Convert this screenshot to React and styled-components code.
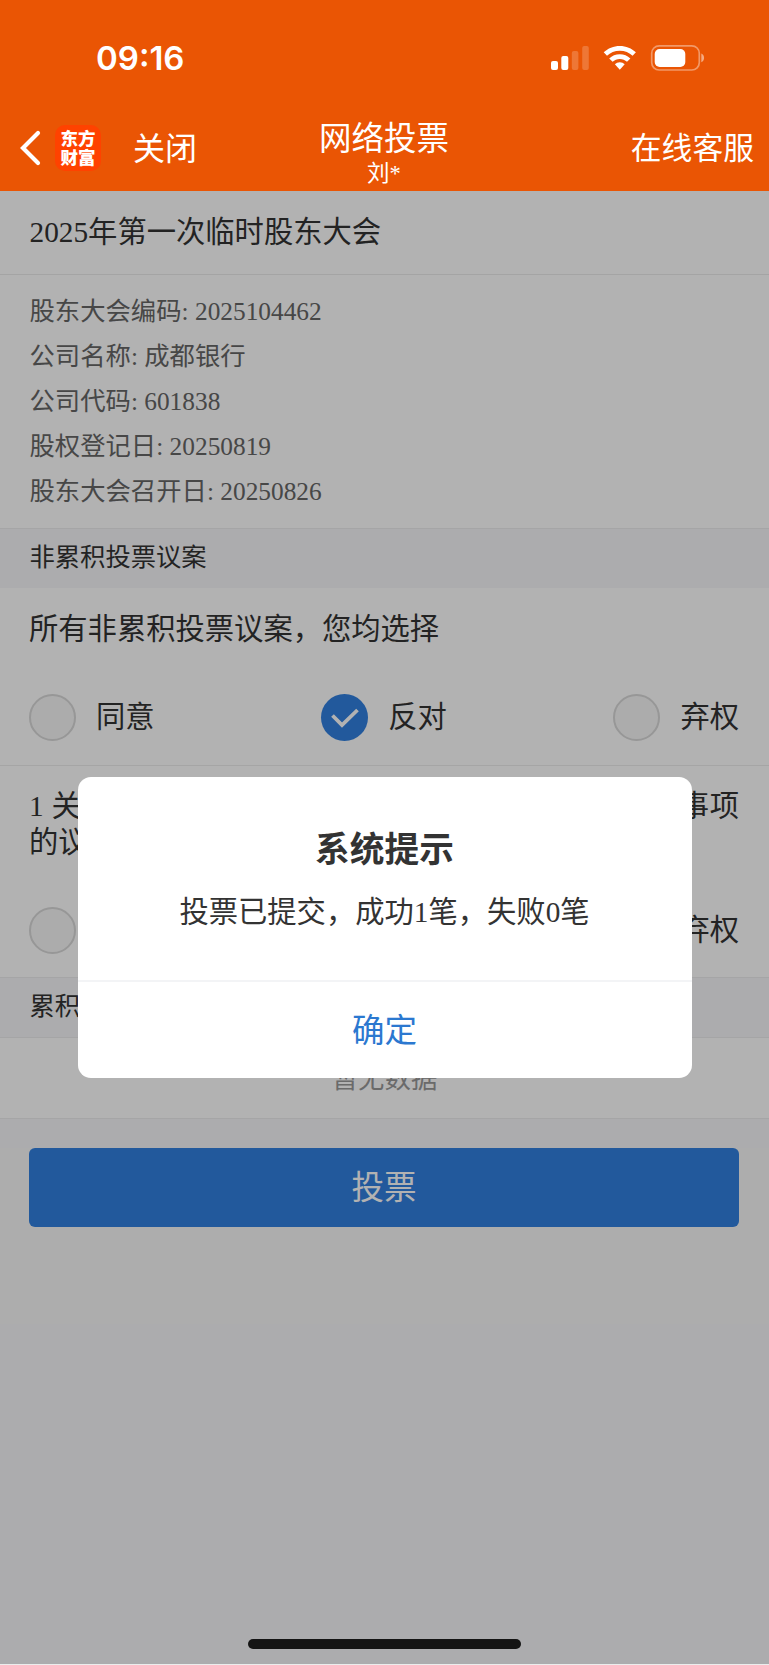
import React, { useState } from 'react';
import styled, { createGlobalStyle } from 'styled-components';

const GlobalStyle = createGlobalStyle`
  * {
    box-sizing: border-box;
  }

  body {
    margin: 0;
    background-color: #f6f7f9;
    font-family: 'Liberation Serif', 'Noto Sans CJK SC', serif;
    color: #333;
  }

  button, h1, h2, p {
    margin: 0;
    padding: 0;
    font: inherit;
  }
`;

const Screen = styled.div`
  display: flex;
  flex-direction: column;
  width: 769px;
  height: 1665px;
  border-bottom: 1px solid #eceded;
  overflow: hidden;
`;

const Header = styled.header`
  height: 191px;
  background-color: #ea5504;
  color: #fff;
  font-family: 'Noto Sans CJK SC', sans-serif;
`;

const StatusBar = styled.div`
  display: flex;
  justify-content: space-between;
  align-items: center;
  height: 115px;
  padding: 0 64px 0 96px;
`;

const Clock = styled.span`
  font-family: Inter, sans-serif;
  font-size: 33px;
  font-weight: 600;
  line-height: 40px;
`;

const StatusIcons = styled.svg`
  display: block;
  width: 154px;
  height: 28px;
`;

const NavBar = styled.nav`
  display: grid;
  grid-template-columns: 1fr auto 1fr;
  height: 76px;
  padding: 0 15px 0 20px;
`;

const NavLeft = styled.div`
  display: flex;
  align-items: center;
  height: 66px;
`;

const BackIcon = styled.svg`
  width: 21px;
  height: 36px;
  margin-right: 14px;
`;

const Logo = styled.div`
  width: 46px;
  height: 46px;
  margin-right: 32px;
  padding-top: 3px;
  border-radius: 10px;
  background-color: #ff4200;
  font-size: 17.5px;
  font-weight: 900;
  line-height: 19px;
  text-align: center;
`;

const NavAction = styled.button`
  justify-self: end;
  height: 66px;
  padding-bottom: 4px;
  border: none;
  background: none;
  color: #fff;
  font-size: ${({ $end }) => ($end ? '30.8px' : '32px')};
  line-height: 62px;
`;

const NavTitle = styled.div`
  margin-right: 6px;
  text-align: center;
`;

const Title = styled.h1`
  font-size: 32.5px;
  line-height: 42px;
`;

const Subtitle = styled.p`
  padding-top: 1px;
  font-family: 'Liberation Serif', 'Noto Sans CJK SC', serif;
  font-size: 22.5px;
  line-height: 32px;
`;

const Content = styled.main`
  position: relative;
  flex: 1;
`;

const MeetingTitle = styled.h2`
  height: 84px;
  padding-left: 29.5px;
  border-bottom: 1px solid #ebebeb;
  background-color: #fff;
  font-size: 29.3px;
  line-height: 82px;
`;

const MeetingInfo = styled.div`
  height: 253px;
  padding: 14px 29.5px 0;
  background-color: #fff;
  color: #666;
  font-size: 25.35px;
  line-height: 45px;
`;

const SectionTitle = styled.div`
  height: 60px;
  padding-left: 29.5px;
  border-top: 1px solid #ededee;
  font-size: 25.3px;
  line-height: 57px;
`;

const Proposal = styled.section`
  height: ${({ $height }) => $height};
  padding: ${({ $top }) => $top} 30px 0 29px;
  background-color: #fff;
  border-bottom: ${({ $last }) => ($last ? 'none' : '1px solid #ededed')};
`;

const ProposalText = styled.p`
  height: ${({ $lines }) => $lines * 36}px;
  font-size: 29.3px;
  line-height: 35.5px;
  text-align: justify;
`;

const Options = styled.div`
  display: flex;
  justify-content: space-between;
  align-items: center;
  margin-top: 46px;
`;

const Option = styled.button`
  display: flex;
  align-items: center;
  gap: 20px;
  border: none;
  background: none;
  color: #333;
  font-size: 29.3px;
  line-height: 47px;
`;

const Radio = styled.span`
  display: flex;
  justify-content: center;
  align-items: center;
  width: 47px;
  height: 47px;
  border: ${({ $checked }) => ($checked ? 'none' : '2px solid #d8d8d8')};
  border-radius: 50%;
  background-color: ${({ $checked }) => ($checked ? '#3180e0' : '#f7f7f7')};
`;

const EmptyRow = styled.div`
  height: 82px;
  border-top: 1px solid #ededee;
  border-bottom: 1px solid #ededee;
  background-color: #fff;
  color: #999;
  font-size: 26.4px;
  line-height: 83px;
  text-align: center;
`;

const SubmitArea = styled.div`
  height: 176px;
  margin-top: 29px;
  padding: 0 30px 0 29px;
  background-color: #f8f8f8;
`;

const SubmitButton = styled.button`
  width: 100%;
  height: 78.5px;
  padding-top: 2px;
  border: none;
  border-radius: 6px;
  background-color: #3180e0;
  color: #fff;
  font-size: 32.5px;
  line-height: 48px;
`;

const Overlay = styled.div`
  position: absolute;
  inset: 0;
  display: flex;
  justify-content: center;
  align-items: flex-start;
  padding-top: 586px;
  background-color: rgba(0, 0, 0, 0.3);
`;

const Dialog = styled.div`
  width: 614px;
  height: 301px;
  padding-top: 50px;
  border-radius: 13px;
  background-color: #fff;
  text-align: center;
`;

const DialogTitle = styled.h2`
  font-size: 34.7px;
  font-weight: 700;
  line-height: 48px;
`;

const DialogText = styled.p`
  height: 105px;
  padding-top: 15px;
  font-size: 29.3px;
  line-height: 45px;
`;

const DialogButton = styled.button`
  width: 100%;
  height: 98px;
  padding-top: 2px;
  border: none;
  border-top: 2px solid #f3f4f6;
  background: none;
  color: #2b78d0;
  font-size: 32.5px;
  line-height: 48px;
`;

const HomeIndicator = styled.div`
  position: absolute;
  bottom: 15px;
  left: 248px;
  width: 273px;
  height: 10px;
  border-radius: 5px;
  background-color: #141414;
`;

const meeting = [
  ['股东大会编码', '2025104462'],
  ['公司名称', '成都银行'],
  ['公司代码', '601838'],
  ['股权登记日', '20250819'],
  ['股东大会召开日', '20250826'],
];

const choices = ['同意', '反对', '弃权'];

function VoteOptions({ value, onChange }) {
  return (
    <Options>
      {choices.map((choice) => (
        <Option key={choice} onClick={() => onChange(choice)}>
          <Radio $checked={value === choice}>
            {value === choice && (
              <svg width='28' height='20' viewBox='0 0 28 20'>
                <path d='M1.5 7.5L11 17L26.5 2' fill='none' stroke='#fff' strokeWidth='3.8' />
              </svg>
            )}
          </Radio>
          {choice}
        </Option>
      ))}
    </Options>
  );
}

function App() {
  const [allVote, setAllVote] = useState('反对');
  const [vote, setVote] = useState('反对');
  const [dialogOpen, setDialogOpen] = useState(true);

  return (
    <Screen>
      <GlobalStyle />
      <Header>
        <StatusBar>
          <Clock>09:16</Clock>
          <StatusIcons viewBox='0 0 154 28' fill='#fff'>
            <rect x='0' y='17' width='7' height='9' rx='2' />
            <rect x='10.3' y='12' width='7' height='14' rx='2' />
            <rect x='20.8' y='7' width='6.6' height='19' rx='2' opacity='.2' />
            <rect x='31.2' y='2' width='6.6' height='24' rx='2' opacity='.2' />
            <path d='M68.8 2C62.6 2 56.9 4.4 52.7 8.3L56 11.7C59.3 8.6 63.8 6.7 68.8 6.7S78.3 8.6 81.6 11.7L84.9 8.3C80.7 4.4 75 2 68.8 2Z' />
            <path d='M68.8 10.2C64.7 10.2 61 11.8 58.2 14.4L61.6 17.8C63.5 16 66 14.9 68.8 14.9S74.1 16 76 17.8L79.4 14.4C76.6 11.8 72.9 10.2 68.8 10.2Z' />
            <path d='M68.8 18.3C66.9 18.3 65.2 19 63.9 20.3L68.8 25.8L73.7 20.3C72.4 19 70.7 18.3 68.8 18.3Z' />
            <rect x='100.7' y='1.8' width='47.6' height='24.2' rx='7.5' fill='none' stroke='#fff' strokeWidth='1.7' opacity='.4' />
            <rect x='103.7' y='5' width='30.6' height='18' rx='5' />
            <path d='M150.3 9.5C154 11.2 154 16.6 150.3 18.3Z' opacity='.5' />
          </StatusIcons>
        </StatusBar>
        <NavBar>
          <NavLeft>
            <BackIcon viewBox='0 0 21 36'>
              <path d='M18 3L3 18L18 33' fill='none' stroke='#fff' strokeWidth='4.2' strokeLinecap='round' />
            </BackIcon>
            <Logo>东方<br />财富</Logo>
            <NavAction>关闭</NavAction>
          </NavLeft>
          <NavTitle>
            <Title>网络投票</Title>
            <Subtitle>刘*</Subtitle>
          </NavTitle>
          <NavAction $end>在线客服</NavAction>
        </NavBar>
      </Header>

      <Content>
        <MeetingTitle>2025年第一次临时股东大会</MeetingTitle>
        <MeetingInfo>
          {meeting.map(([label, value]) => (
            <p key={label}>{label}: {value}</p>
          ))}
        </MeetingInfo>

        <SectionTitle>非累积投票议案</SectionTitle>
        <Proposal $height='178px' $top='24px'>
          <ProposalText $lines={1}>所有非累积投票议案，您均选择</ProposalText>
          <VoteOptions value={allVote} onChange={setAllVote} />
        </Proposal>
        <Proposal $height='211px' $top='23px' $last>
          <ProposalText $lines={2}>
            1 关于成都银行股份有限公司不再设立监事会相关事项的议案
          </ProposalText>
          <VoteOptions value={vote} onChange={setVote} />
        </Proposal>

        <SectionTitle>累积投票议案</SectionTitle>
        <EmptyRow>暂无数据</EmptyRow>
        <SubmitArea>
          <SubmitButton onClick={() => setDialogOpen(true)}>投票</SubmitButton>
        </SubmitArea>

        {dialogOpen && (
          <Overlay>
            <Dialog>
              <DialogTitle>系统提示</DialogTitle>
              <DialogText>投票已提交，成功1笔，失败0笔</DialogText>
              <DialogButton onClick={() => setDialogOpen(false)}>确定</DialogButton>
            </Dialog>
          </Overlay>
        )}
        <HomeIndicator />
      </Content>
    </Screen>
  );
}

export default App;
